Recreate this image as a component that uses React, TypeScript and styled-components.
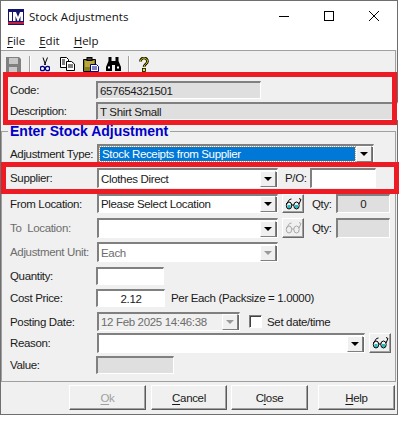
import styled, { createGlobalStyle } from "styled-components";

const FACE = "#f0f0f0";
const READONLY = "#dfdfdf";
const SHADOW = "#808080";
const RED = "#ed1c24";
const FONT = `"Liberation Sans", Arial, sans-serif`;

const GlobalStyle = createGlobalStyle`
  html, body { margin: 0; padding: 0; background: #fff; }
  body { font-family: ${FONT}; font-size: 11.5px; letter-spacing: -0.34px; color: #1a1a1a; }
`;

const Window = styled.div`
  position: relative;
  box-sizing: border-box;
  width: 398px;
  height: 415px;
  background: ${FACE};
  border: 1px solid #6f6f6f;
`;

const TitleBar = styled.div`
  display: flex;
  align-items: center;
  height: 31px;
  background: #fff;
  padding-left: 7px;
  font-family: "Open Sans", "Noto Sans", sans-serif;
  font-size: 11.5px;
  letter-spacing: 0;
  color: #111;
`;

const TitleText = styled.span`
  margin-left: 5px;
`;

const WindowButtons = styled.div`
  display: flex;
  align-items: center;
  margin: 0 1px 2px auto;
`;

const WindowButton = styled.div`
  display: flex;
  align-items: center;
  justify-content: center;
  width: 45px;
  height: 29px;
`;

const MenuBar = styled.div`
  display: flex;
  align-items: center;
  gap: 14px;
  box-sizing: border-box;
  height: 18px;
  padding: 0 0 1px 6px;
  background: #fff;
  font-family: "Open Sans", "Noto Sans", sans-serif;
  font-size: 11.5px;
  letter-spacing: 0;
  color: #111;
`;

const U = styled.span`
  text-decoration: underline;
  text-underline-offset: 2px;
`;

const Toolbar = styled.div`
  display: flex;
  align-items: center;
  box-sizing: border-box;
  height: 26px;
  margin-right: 1px;
  border-top: 1px solid #a0a0a0;
  border-right: 1px solid #a0a0a0;
  padding: 1px 0 0 5px;
`;

const ToolIcon = styled.svg<{ $ml: number }>`
  flex: none;
  margin-left: ${(p) => p.$ml}px;
`;

const ToolSeparator = styled.div<{ $ml: number }>`
  width: 1px;
  height: 17px;
  margin-left: ${(p) => p.$ml}px;
  background: #a0a0a0;
  border-right: 1px solid #fff;
`;

const ItemPanel = styled.div`
  display: flex;
  flex-direction: column;
  gap: 3px;
  box-sizing: border-box;
  height: 44px;
  padding: 5px 0 0 9px;
`;

const Row = styled.div<{ $mt?: number; $h?: number }>`
  display: flex;
  align-items: center;
  height: ${(p) => p.$h ?? 20}px;
  margin-top: ${(p) => p.$mt ?? 0}px;
`;

const Label = styled.label<{ $disabled?: boolean }>`
  flex: none;
  width: 86px;
  white-space: nowrap;
  color: ${(p) => (p.$disabled ? "#6d6d6d" : "#1a1a1a")};
`;

const Field = styled.div<{ $w: number; $fill?: string; $align?: string; $ml?: number }>`
  flex: none;
  box-sizing: border-box;
  display: flex;
  align-items: center;
  justify-content: ${(p) => p.$align ?? "flex-start"};
  width: ${(p) => p.$w}px;
  height: 100%;
  margin-left: ${(p) => p.$ml ?? 0}px;
  padding: 0 2px;
  background: ${(p) => p.$fill ?? "#fff"};
  border: 1px solid #fff;
  border-top: 2px solid ${SHADOW};
  border-left: 2px solid ${SHADOW};
  white-space: nowrap;
  overflow: hidden;
`;

const Combo = styled.div<{ $w: number; $fill?: string }>`
  flex: none;
  box-sizing: border-box;
  display: flex;
  align-items: center;
  width: ${(p) => p.$w}px;
  height: 100%;
  margin-left: 1px;
  background: ${(p) => p.$fill ?? "#fff"};
  border: 1px solid #fff;
  border-top: 2px solid ${SHADOW};
  border-left: 2px solid ${SHADOW};
  white-space: nowrap;
  overflow: hidden;
`;

const ComboText = styled.span<{ $selected?: boolean; $muted?: boolean }>`
  flex: 1;
  align-self: stretch;
  display: flex;
  align-items: center;
  min-width: 0;
  padding-left: 2px;
  margin: ${(p) => (p.$selected ? "1px" : "0")};
  background: ${(p) => (p.$selected ? "#0078d7" : "transparent")};
  outline: ${(p) => (p.$selected ? "1px dotted #d8a050" : "none")};
  color: ${(p) => (p.$selected ? "#fff" : p.$muted ? "#6d6d6d" : "#1a1a1a")};
`;

const ArrowButton = styled.div<{ $disabled?: boolean }>`
  flex: none;
  box-sizing: border-box;
  display: flex;
  align-items: center;
  justify-content: center;
  width: 16px;
  height: 16px;
  background: ${FACE};
  border: 1px solid;
  border-color: #fff ${SHADOW} ${SHADOW} #fff;
  box-shadow: 1px 1px 0 #6a6a6a;
  margin-right: 1px;
  &::after {
    content: "";
    border-left: 4px solid transparent;
    border-right: 4px solid transparent;
    border-top: 4px solid ${(p) => (p.$disabled ? "#9a9a9a" : "#000")};
  }
`;

const Legend = styled.legend`
  margin-left: -2px;
  padding: 0 2px;
  font-size: 14px;
  line-height: 15px;
  font-weight: 700;
  letter-spacing: 0;
  color: #0000c8;
  white-space: nowrap;
`;

const Group = styled.fieldset`
  box-sizing: border-box;
  width: 395px;
  height: 258px;
  margin: 4px 0 0 0;
  padding: 5px 0 0 8px;
  min-width: 0;
  border: 1px solid #a0a0a0;
`;

const GlassButton = styled.div`
  flex: none;
  box-sizing: border-box;
  display: flex;
  align-items: center;
  justify-content: center;
  width: 22px;
  height: 100%;
  margin-left: 4px;
  background: ${FACE};
  border: 1px solid;
  border-color: #fff #6a6a6a #6a6a6a #fff;
  box-shadow: inset -1px -1px 0 #a0a0a0;
`;

const SideLabel = styled.span<{ $ml: number }>`
  flex: none;
  margin-left: ${(p) => p.$ml}px;
  white-space: nowrap;
`;

const CheckBox = styled.span`
  flex: none;
  box-sizing: border-box;
  width: 13px;
  height: 13px;
  margin-left: 9px;
  background: #fff;
  border: 1px solid #fff;
  border-top: 1px solid ${SHADOW};
  border-left: 1px solid ${SHADOW};
  box-shadow: inset 1px 1px 0 #404040;
`;

const ButtonBar = styled.div`
  display: flex;
  height: 25px;
  margin-top: 3px;
  padding-left: 68px;
`;

const DialogButton = styled.button<{ $ml?: number; $w?: number }>`
  box-sizing: border-box;
  width: ${(p) => p.$w ?? 77}px;
  height: 25px;
  margin-left: ${(p) => p.$ml ?? 0}px;
  padding: 0;
  background: ${FACE};
  border: 1px solid;
  border-color: #fff #5a5a5a #5a5a5a #fff;
  box-shadow: inset -1px -1px 0 #a0a0a0;
  font-family: ${FONT};
  font-size: 11.5px;
  letter-spacing: -0.34px;
  color: #1a1a1a;
  &:disabled {
    color: #a0a0a0;
  }
`;

const Annotation = styled.div<{ $x: number; $y: number; $w: number; $h: number }>`
  position: absolute;
  box-sizing: border-box;
  left: ${(p) => p.$x}px;
  top: ${(p) => p.$y}px;
  width: ${(p) => p.$w}px;
  height: ${(p) => p.$h}px;
  border: 5px solid ${RED};
  pointer-events: none;
`;

function Logo() {
  return (
    <svg width="16" height="16" viewBox="0 0 16 16">
      <rect width="16" height="16" fill="#14146e" />
      <rect x="1" y="3" width="3" height="9" fill="#fff" />
      <path d="M5 12V3h3l2 5 2-5h3v9h-2.500V7l-2 5h-1l-2-5v5z" fill="#fff" />
      <rect x="0" y="13" width="16" height="2" fill="#c02040" />
    </svg>
  );
}

function Glasses({ off }: { off?: boolean }) {
  const line = off ? "#a8a8a8" : "#000";
  return (
    <svg width="17" height="12" viewBox="0 0 17 12" fill="none">
      {!off && <rect x="2.500" y="7" width="3" height="3.500" fill="#19c0c8" />}
      {!off && <rect x="10" y="7" width="3" height="3.500" fill="#19c0c8" />}
      <ellipse cx="4" cy="7.500" rx="2.700" ry="3.500" stroke={line} />
      <ellipse cx="11.500" cy="7.500" rx="2.700" ry="3.500" stroke={line} />
      <path d="M6.500 7 9 7M1.500 6 4.500 1.500 6.500 1M14 6 16 1.500 14 0.500" stroke={line} />
    </svg>
  );
}

export default function App() {
  return (
    <>
      <GlobalStyle />
      <Window>
        <TitleBar>
          <Logo />
          <TitleText>Stock Adjustments</TitleText>
          <WindowButtons>
            <WindowButton>
              <svg width="10" height="10"><rect y="5" width="10" height="1" fill="#000" /></svg>
            </WindowButton>
            <WindowButton>
              <svg width="10" height="10"><rect x="0.500" y="0.500" width="9" height="9" fill="none" stroke="#000" /></svg>
            </WindowButton>
            <WindowButton>
              <svg width="10" height="10"><path d="M0 0l10 10M10 0L0 10" stroke="#000" strokeWidth="1" /></svg>
            </WindowButton>
          </WindowButtons>
        </TitleBar>
        <MenuBar>
          <span><U>F</U>ile</span>
          <span><U>E</U>dit</span>
          <span><U>H</U>elp</span>
        </MenuBar>
        <Toolbar>
          <ToolIcon $ml={0} width="15" height="15" viewBox="0 0 15 15">
            <path d="M0 0h13l2 2v13H0z" fill="#808080" />
            <rect x="3" y="1" width="9" height="6" fill="#c8c8c8" />
            <rect x="3" y="10" width="8" height="5" fill="#c8c8c8" />
          </ToolIcon>
          <ToolSeparator $ml={8} />
          <ToolIcon $ml={9} width="10" height="15" viewBox="0 0 10 15" fill="none">
            <path d="M3 0.500 5.500 8M7.500 0.500 4.500 8" stroke="#000" strokeWidth="1" />
            <circle cx="2.500" cy="11.500" r="2.200" stroke="#000088" strokeWidth="1.300" />
            <circle cx="7.500" cy="11.500" r="2.200" stroke="#000088" strokeWidth="1.300" />
          </ToolIcon>
          <ToolIcon $ml={10} width="15" height="14" viewBox="0 0 15 14">
            <path d="M0.500 0.500h6l2 2v8h-8z" fill="#fff" stroke="#000" />
            <path d="M6.500 4.500h5l3 2.500v6.500h-8z" fill="#fff" stroke="#000" />
            <path d="M8 8h5M8 10h5M2 3h3M2 5h3M2 7h3" stroke="#000" />
          </ToolIcon>
          <ToolIcon $ml={8} width="16" height="15" viewBox="0 0 16 15">
            <path d="M0.500 2.500h12v9h-3v3h-9z" fill="#8a7a20" stroke="#000" />
            <path d="M2 4h9v6H2z" fill="#b8a838" />
            <rect x="4" y="0.500" width="5" height="3" fill="#404040" stroke="#000" />
            <path d="M7.500 7.500h6l2 2v5h-8z" fill="#fff" stroke="#000088" />
            <path d="M9 10h5M9 12h5" stroke="#000088" />
          </ToolIcon>
          <ToolIcon $ml={7} width="15" height="14" viewBox="0 0 15 14">
            <path d="M2.500 0h3v4h4V0h3v4l2.500 6v4H9V8H6v6H0v-4l2.500-6z" fill="#000" />
            <rect x="2" y="9.500" width="2" height="2" fill="#fff" />
            <rect x="11" y="9.500" width="2" height="2" fill="#fff" />
          </ToolIcon>
          <ToolSeparator $ml={7} />
          <ToolIcon $ml={9} width="10" height="15" viewBox="0 0 10 15" fill="none">
            <path d="M1.500 4.500C1.500 2 3.500 1 5 1s3.500 1 3.500 3.500C8.500 7 5 7 5 10" stroke="#000" strokeWidth="2.600" />
            <path d="M1.500 4.500C1.500 2 3.500 1 5 1s3.500 1 3.500 3.500C8.500 7 5 7 5 10" stroke="#f4e000" strokeWidth="1" />
            <rect x="3.500" y="11.500" width="3" height="3" fill="#f4e000" stroke="#000" strokeWidth="0.800" />
          </ToolIcon>
        </Toolbar>

        <ItemPanel>
          <Row $h={18}>
            <Label>Code:</Label>
            <Field $w={165} $fill={READONLY}>657654321501</Field>
          </Row>
          <Row $h={18}>
            <Label>Description:</Label>
            <Field $w={302} $fill={READONLY}>T Shirt Small</Field>
          </Row>
        </ItemPanel>

        <Group>
          <Legend>Enter Stock Adjustment</Legend>
          <Row $h={19}>
            <Label>Adjustment Type:</Label>
            <Combo $w={277}>
              <ComboText $selected>Stock Receipts from Supplier</ComboText>
              <ArrowButton />
            </Combo>
          </Row>
          <Row $mt={5}>
            <Label>Supplier:</Label>
            <Combo $w={181}>
              <ComboText>Clothes Direct</ComboText>
              <ArrowButton />
            </Combo>
            <SideLabel $ml={7}>P/O:</SideLabel>
            <Field $w={66} $ml={3} />
          </Row>
          <Row $mt={6} $h={19}>
            <Label>From Location:</Label>
            <Combo $w={181}>
              <ComboText>Please Select Location</ComboText>
              <ArrowButton />
            </Combo>
            <GlassButton><Glasses /></GlassButton>
            <SideLabel $ml={8}>Qty:</SideLabel>
            <Field $w={54} $ml={4} $fill={READONLY} $align="center">0</Field>
          </Row>
          <Row $mt={5}>
            <Label $disabled>To&nbsp; Location:</Label>
            <Combo $w={181}>
              <ComboText />
              <ArrowButton />
            </Combo>
            <GlassButton><Glasses off /></GlassButton>
            <SideLabel $ml={8}>Qty:</SideLabel>
            <Field $w={54} $ml={4} $fill={READONLY} />
          </Row>
          <Row $mt={4}>
            <Label $disabled>Adjustment Unit:</Label>
            <Combo $w={181}>
              <ComboText $muted>Each</ComboText>
              <ArrowButton $disabled />
            </Combo>
          </Row>
          <Row $mt={5} $h={18}>
            <Label>Quantity:</Label>
            <Field $w={68} />
          </Row>
          <Row $mt={4} $h={18}>
            <Label>Cost Price:</Label>
            <Field $w={69} $align="center">2.12</Field>
            <SideLabel $ml={6}>Per Each (Packsize = 1.0000)</SideLabel>
          </Row>
          <Row $mt={5} $h={19}>
            <Label>Posting Date:</Label>
            <Combo $w={143} $fill={FACE}>
              <ComboText $muted>12 Feb 2025 14:46:38</ComboText>
              <ArrowButton $disabled />
            </Combo>
            <CheckBox />
            <SideLabel $ml={5}>Set date/time</SideLabel>
          </Row>
          <Row $mt={2}>
            <Label>Reason:</Label>
            <Combo $w={268}>
              <ComboText />
              <ArrowButton />
            </Combo>
            <GlassButton><Glasses /></GlassButton>
          </Row>
          <Row $mt={3} $h={18}>
            <Label>Value:</Label>
            <Field $w={78} $fill={READONLY} />
          </Row>
        </Group>

        <ButtonBar>
          <DialogButton disabled><U>O</U>k</DialogButton>
          <DialogButton $ml={5} $w={76}><U>C</U>ancel</DialogButton>
          <DialogButton $ml={4}>C<U>l</U>ose</DialogButton>
          <DialogButton $ml={10}><U>H</U>elp</DialogButton>
        </ButtonBar>

        <Annotation $x={2} $y={71} $w={394} $h={53} />
        <Annotation $x={0} $y={161} $w={398} $h={32} />
      </Window>
    </>
  );
}
